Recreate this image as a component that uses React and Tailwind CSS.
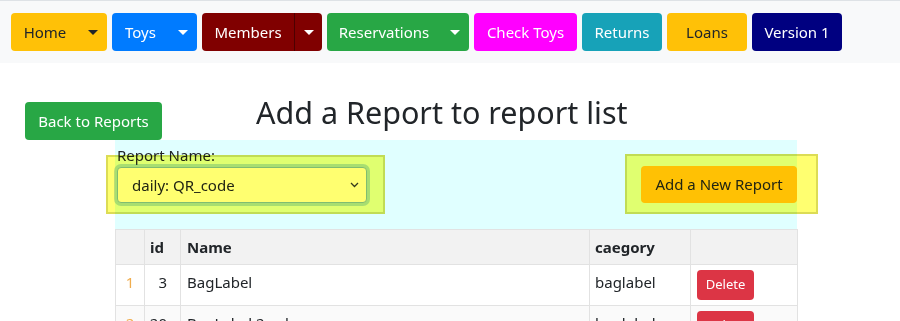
const navItems = [
    { label: 'Home', w: 'w-[96px]', split: true, bg: 'bg-[#ffc107]', text: 'text-[#212529]' },
    { label: 'Toys', w: 'w-[85px]', split: true, bg: 'bg-[#007bff]', text: 'text-white' },
    { label: 'Members', w: 'w-[120px]', split: true, bg: 'bg-[#800000]', text: 'text-white', divider: true },
    { label: 'Reservations', w: 'w-[142px]', split: true, bg: 'bg-[#28a745]', text: 'text-white' },
    { label: 'Check Toys', w: 'w-[103px]', bg: 'bg-[#ff00ff]', text: 'text-white' },
    { label: 'Returns', w: 'w-[80px]', bg: 'bg-[#17a2b8]', text: 'text-white' },
    { label: 'Loans', w: 'w-[80px]', bg: 'bg-[#ffc107]', text: 'text-[#212529]' },
    { label: 'Version 1', w: 'w-[90px]', bg: 'bg-[#000080]', text: 'text-white' },
];

const rows = [
    { n: 1, id: 3, name: 'BagLabel', cat: 'baglabel' },
    { n: 2, id: 20, name: 'BagLabel 2 column', cat: 'baglabel' },
];

const Caret = () => (
    <span className="inline-block w-0 h-0 border-t-[5px] border-x-[5px] border-x-transparent border-t-current" />
);

const NavButton = ({ item }) => (
    <div className={`${item.w} ${item.bg} ${item.text} h-[38px] rounded-[4px] flex items-stretch text-[15px] shrink-0`}>
        <span className="flex-1 flex items-center justify-center whitespace-nowrap">{item.label}</span>
        {item.split && (
            <span
                className={`w-[28px] flex items-center justify-center ${
                    item.divider ? 'border-l border-[#4d0000]' : ''
                }`}
            >
                <Caret />
            </span>
        )}
    </div>
);

const App = () => {
    return (
        <div className="h-[321px] bg-white text-[#212529] font-['Noto_Sans',sans-serif] overflow-hidden">
            {/* top navigation */}
            <nav className="h-[63px] bg-[#f8f9fa] border-t border-[#dee2e6] flex items-center gap-[5px] pl-[11px]">
                {navItems.map((item) => (
                    <NavButton key={item.label} item={item} />
                ))}
            </nav>

            <div className="flex items-start">
                <button className="ml-[25px] mt-[39px] w-[137px] h-[38px] rounded-[4px] bg-[#28a745] text-white text-[15px]">
                    Back to Reports
                </button>
                <h3 className="ml-[94px] mt-[31px] text-[30.5px] leading-[1.2] whitespace-nowrap">
                    Add a Report to report list
                </h3>
            </div>

            {/* report picker */}
            <div className="relative ml-[115px] w-[682px] bg-[#e0ffff] pt-[4px] pb-[26px] flex items-end justify-between">
                <div className="w-[252px] pl-[2px]">
                    <div className="text-[15px] leading-[22px]">Report Name:</div>
                    <div className="relative mt-[1px]">
                        <select
                            defaultValue="qr"
                            className="appearance-none w-full h-[36px] rounded-[4px] bg-white border border-[#80bdff] shadow-[0_0_0_3px_rgba(0,123,255,0.25)] pl-[14px] text-[15px] text-[#212529] outline-none"
                        >
                            <option value="qr">daily: QR_code</option>
                        </select>
                        <svg
                            className="absolute right-[8px] top-[15px] pointer-events-none"
                            width="9"
                            height="6"
                            viewBox="0 0 9 6"
                        >
                            <polyline points="1,1 4.5,4.5 8,1" fill="none" stroke="#343a40" strokeWidth="1.3" />
                        </svg>
                    </div>
                </div>
                <button className="w-[156px] h-[37px] rounded-[4px] bg-[#ffc107] text-[#212529] text-[15px]">
                    Add a New Report
                </button>

                {/* highlight overlays */}
                <div className="absolute left-[-9px] top-[15px] w-[279px] h-[59px] bg-[#ffff70] mix-blend-multiply border-2 border-[#dcdc55] pointer-events-none" />
                <div className="absolute left-[510px] top-[14px] w-[193px] h-[60px] bg-[#ffff70] mix-blend-multiply border-2 border-[#dcdc55] pointer-events-none" />
            </div>

            {/* report table */}
            <table className="ml-[115px] w-[682px] border-collapse text-[15px] table-fixed">
                <colgroup>
                    <col className="w-[29px]" />
                    <col className="w-[36px]" />
                    <col className="w-[409px]" />
                    <col className="w-[101px]" />
                    <col className="w-[107px]" />
                </colgroup>
                <thead>
                    <tr className="h-[35px] bg-[#f2f2f2]">
                        <th className="border border-[#e2e2e2]" />
                        <th className="border border-[#e2e2e2] text-left pl-[5px] font-bold">id</th>
                        <th className="border border-[#e2e2e2] text-left pl-[6px] font-bold">Name</th>
                        <th className="border border-[#e2e2e2] text-left pl-[5px] font-bold">caegory</th>
                        <th className="border border-[#e2e2e2]" />
                    </tr>
                </thead>
                <tbody>
                    {rows.map((r) => (
                        <tr key={r.n} className={`h-[41px] ${r.n % 2 === 0 ? 'bg-[#fafafa]' : 'bg-white'}`}>
                            <td className="border border-[#e2e2e2] text-center text-[#f0ad4e] pb-[5px]">{r.n}</td>
                            <td className="border border-[#e2e2e2] text-right pr-[13px] pb-[5px]">{r.id}</td>
                            <td className="border border-[#e2e2e2] pl-[6px] pb-[5px] whitespace-nowrap">{r.name}</td>
                            <td className="border border-[#e2e2e2] pl-[5px] pb-[5px]">{r.cat}</td>
                            <td className="border border-[#e2e2e2] pl-[6px] align-top pt-[5px]">
                                <button className="w-[57px] h-[30px] rounded-[4px] bg-[#dc3545] text-white text-[13px]">
                                    Delete
                                </button>
                            </td>
                        </tr>
                    ))}
                </tbody>
            </table>
        </div>
    );
};

export default App;
